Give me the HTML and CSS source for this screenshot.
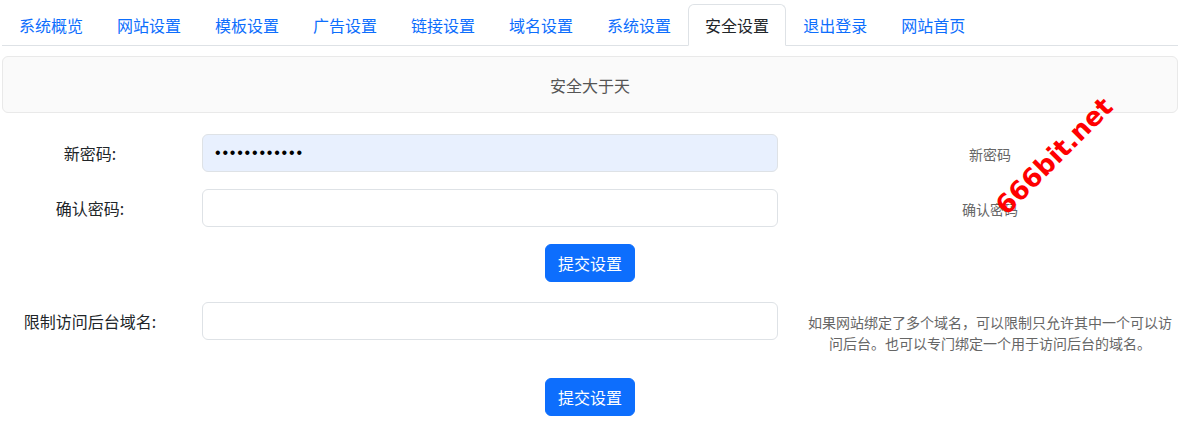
FILE: index.html
```html
<!DOCTYPE html>
<html lang="zh-CN">
<head>
<meta charset="utf-8">
<title>安全设置</title>
<link rel="stylesheet" href="styles.css">
</head>
<body>
<div class="page">
  <nav class="tabs">
    <a class="tab" href="#">系统概览</a>
    <a class="tab" href="#">网站设置</a>
    <a class="tab" href="#">模板设置</a>
    <a class="tab" href="#">广告设置</a>
    <a class="tab" href="#">链接设置</a>
    <a class="tab" href="#">域名设置</a>
    <a class="tab" href="#">系统设置</a>
    <a class="tab active" href="#">安全设置</a>
    <a class="tab" href="#">退出登录</a>
    <a class="tab" href="#">网站首页</a>
  </nav>
  <div class="banner">安全大于天</div>
  <form class="form">
    <div class="row">
      <label class="label" for="pw1">新密码:</label>
      <input class="input autofill" id="pw1" type="password" value="abcdefghijkl">
      <div class="help">新密码</div>
    </div>
    <div class="row">
      <label class="label" for="pw2">确认密码:</label>
      <input class="input" id="pw2" type="password">
      <div class="help">确认密码</div>
    </div>
    <div class="actions actions-first">
      <button class="btn" type="button">提交设置</button>
    </div>
    <div class="row row-tall">
      <label class="label" for="dom">限制访问后台域名:</label>
      <input class="input" id="dom" type="text">
      <div class="help">如果网站绑定了多个域名，可以限制只允许其中一个可以访问后台。也可以专门绑定一个用于访问后台的域名。</div>
    </div>
    <div class="actions">
      <button class="btn" type="button">提交设置</button>
    </div>
  </form>
  <div class="watermark">666bit.net</div>
</div>
</body>
</html>
```

FILE: styles.css
```css
html, body {
  margin: 0;
  padding: 0;
  background: #fff;
}
body {
  font-family: "Noto Sans CJK SC", "Liberation Sans", sans-serif;
  font-size: 16px;
  line-height: 24px;
  color: #212529;
}
.page {
  position: relative;
  padding: 4px 7px 0 2px;
}
.tabs {
  display: flex;
  border-bottom: 1px solid #dee2e6;
}
.tab {
  display: block;
  padding: 8px 16px;
  border: 1px solid transparent;
  border-radius: 6px 6px 0 0;
  margin-bottom: -1px;
  color: #0d6efd;
  text-decoration: none;
  font-size: 16px;
  line-height: 24px;
}
.tab.active {
  color: #212529;
  background: #fff;
  border-color: #dee2e6 #dee2e6 #fff;
}
.banner {
  margin-top: 10px;
  height: 55px;
  border: 1px solid #e9e9e9;
  border-radius: 6px;
  background: #fafafa;
  color: #555;
  font-size: 16px;
  line-height: 57px;
  text-align: center;
}
.form {
  margin: 21px 0 0;
}
.row {
  display: grid;
  grid-template-columns: 176px 576px 376px;
  column-gap: 24px;
  align-items: start;
  margin-bottom: 17px;
}
.row-tall {
  margin-bottom: 24px;
}
.label {
  padding: 7px 0;
  text-align: center;
  font-size: 16px;
  line-height: 24px;
  color: #212529;
}
.input {
  box-sizing: border-box;
  width: 100%;
  height: 38px;
  margin: 0;
  padding: 6px 12px;
  border: 1px solid #dee2e6;
  border-radius: 6px;
  background: #fff;
  font-family: "Liberation Sans", sans-serif;
  font-size: 16px;
  line-height: 24px;
  color: #000;
  outline: none;
}
.input.autofill {
  background: #e8f0fe;
  letter-spacing: 1.8px;
}
.help {
  padding-top: 10px;
  text-align: center;
  font-size: 14px;
  line-height: 21px;
  color: #666;
}
.actions {
  display: flex;
  justify-content: center;
}
.actions-first {
  margin-bottom: 20px;
}
.btn {
  padding: 6px 12px;
  border: 1px solid #0d6efd;
  border-radius: 6px;
  background: #0d6efd;
  color: #fff;
  font-family: "Noto Sans CJK SC", "Liberation Sans", sans-serif;
  font-size: 16px;
  line-height: 24px;
  cursor: pointer;
}
.watermark {
  position: absolute;
  left: 974px;
  top: 143px;
  width: 160px;
  text-align: center;
  font-family: "DejaVu Sans", sans-serif;
  font-weight: bold;
  font-size: 26px;
  line-height: 26px;
  color: #ff0000;
  transform: rotate(-45deg);
  pointer-events: none;
}
```
